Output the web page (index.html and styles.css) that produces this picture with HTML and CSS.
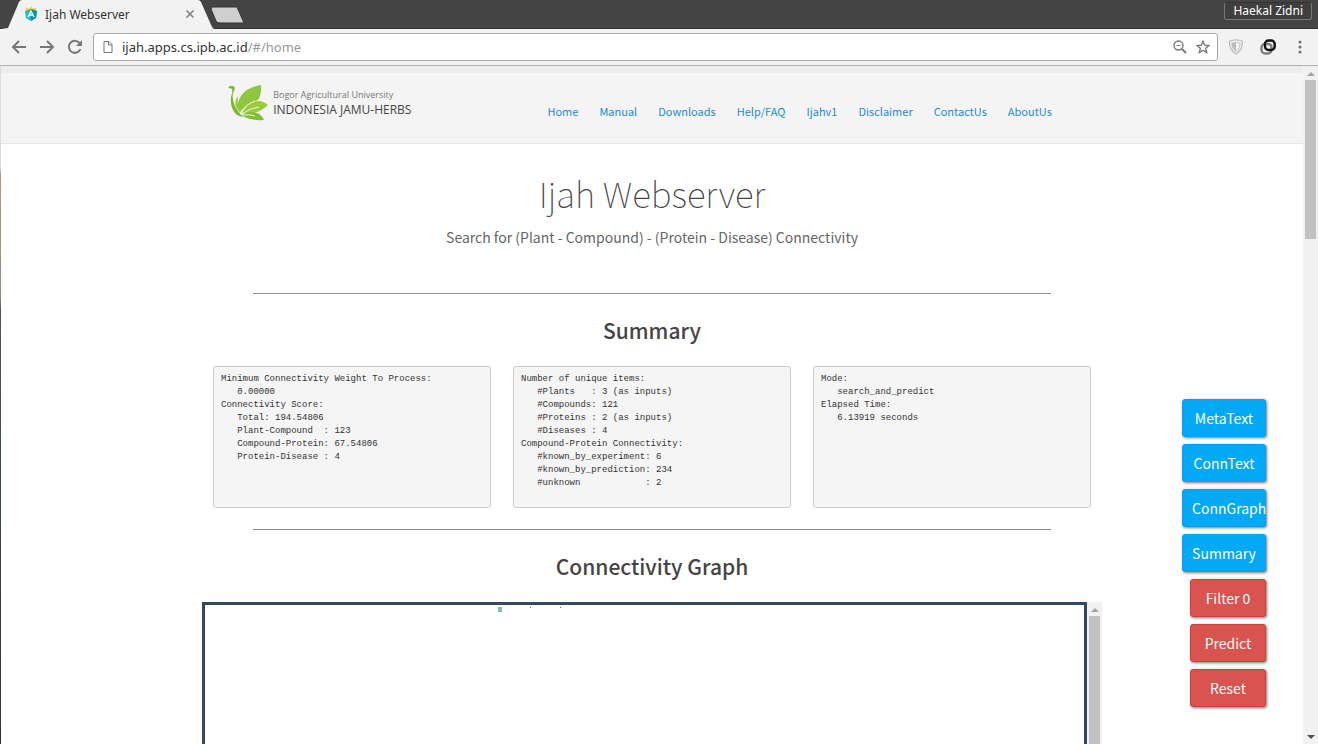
FILE: index.html
```html
<!DOCTYPE html>
<html lang="en">
<head>
<meta charset="utf-8">
<title>Ijah Webserver</title>
<link rel="stylesheet" href="styles.css">
</head>
<body>
<div class="browser">
  <div class="tabstrip">
    <svg class="tab-shape" width="250" height="29" viewBox="0 0 250 29" aria-hidden="true">
      <path d="M0 29L7 28L18 2Q19 0 21 0H197Q199 0 200 2L211 27L213 29Z" fill="#f2f2f2"/>
      <path d="M211 7H236L243 23H219Q216 23 215 21L210 9Z" fill="#cfcfcf" stroke="#333"/>
    </svg>
    <div class="tab">
      <svg width="12" height="14" viewBox="0 0 12 14" aria-hidden="true">
        <path d="M1 0L3 2L6 0L9 2L11 0V5H1Z" fill="#ffca28"/>
        <path d="M0 4L6 2L12 4L11 11L6 14L1 11Z" fill="#26b8cc"/>
        <path d="M6 2L12 4L11 11L6 14Z" fill="#0097a7"/>
        <path d="M3 10L6 4L9 10M4 8H8" fill="none" stroke="#fff" stroke-width="1.3"/>
      </svg>
      <span class="tab-title">Ijah Webserver</span>
      <button class="icon-button" aria-label="Close tab"><svg width="10" height="10" viewBox="0 0 10 10"><path d="M1.5 1.5L8.500 8.500M8.500 1.500L1.500 8.500" stroke="#808080" stroke-width="1.6"/></svg></button>
    </div>
    <button class="profile">Haekal Zidni</button>
  </div>
  <div class="toolbar">
    <button class="icon-button" aria-label="Back"><svg width="16" height="16" viewBox="0 0 16 16"><path d="M15 8H2M8 2L2 8L8 14" fill="none" stroke="#777" stroke-width="2"/></svg></button>
    <button class="icon-button" aria-label="Forward"><svg width="16" height="16" viewBox="0 0 16 16"><path d="M1 8H14M8 2L14 8L8 14" fill="none" stroke="#777" stroke-width="2"/></svg></button>
    <button class="icon-button" aria-label="Reload"><svg width="16" height="16" viewBox="0 0 16 16"><path d="M13.500 10A6 6 0 1 1 12.500 4" fill="none" stroke="#777" stroke-width="2"/><path d="M15 1V7H9Z" fill="#777"/></svg></button>
    <div class="omnibox">
      <svg width="10" height="12" viewBox="0 0 10 12" aria-hidden="true"><path d="M1 .5H6L9 3.500V11.500H1ZM5.500 .5V4H9" fill="none" stroke="#777"/></svg>
      <div class="url">ijah.apps.cs.ipb.ac.id<span class="url-path">/#/home</span></div>
      <button class="icon-button" aria-label="Zoom out"><svg width="14" height="14" viewBox="0 0 14 14"><circle cx="5.500" cy="5.500" r="4.500" fill="none" stroke="#777" stroke-width="1.4"/><path d="M3.500 5.500H7.500" stroke="#777"/><path d="M9 9L13 13" stroke="#777" stroke-width="1.800"/></svg></button>
      <button class="icon-button" aria-label="Bookmark this page"><svg width="14" height="14" viewBox="0 0 14 14"><path d="M7 1.200L8.700 5.200L13 5.500L9.700 8.300L10.700 12.600L7 10.300L3.300 12.600L4.300 8.300L1 5.500L5.300 5.200Z" fill="none" stroke="#717171" stroke-width="1.300"/></svg></button>
    </div>
    <div class="extensions">
      <button class="icon-button" aria-label="Shield"><svg width="16" height="16" viewBox="0 0 16 16"><path d="M8 .8Q11.500 .8 14.500 2.300Q15 10.500 8 15Q1 10.500 1.500 2.300Q4.500 .8 8 .8Z" fill="#eee" stroke="#bdbdbd" stroke-width="1.200"/><path d="M8 3.500Q10 3.500 12.300 4.300Q12 9.500 8 12.500Q4 9.500 3.700 4.300Q6 3.500 8 3.500Z" fill="#f5f5f5" stroke="#c6c6c6"/><path d="M8 3.500V12.500Q4 9.500 3.700 4.300Q6 3.500 8 3.500Z" fill="#bdbdbd"/></svg></button>
      <button class="icon-button" aria-label="Linked extension"><svg width="16" height="16" viewBox="0 0 16 16"><rect x="1.500" y="5" width="10" height="9.500" rx="3.500" fill="none" stroke="#808080" stroke-width="2.400"/><rect x="5" y="1.500" width="9.700" height="9.500" rx="3.500" fill="none" stroke="#111" stroke-width="2.400"/><path d="M6 5H8.500Q11.500 5 11.500 8" fill="none" stroke="#808080" stroke-width="2"/></svg></button>
      <button class="icon-button" aria-label="Menu"><svg width="16" height="16" viewBox="0 0 16 16"><g fill="#777"><circle cx="8" cy="3" r="1.600"/><circle cx="8" cy="8" r="1.600"/><circle cx="8" cy="13" r="1.600"/></g></svg></button>
    </div>
  </div>

  <div class="viewport">
    <div class="page">
      <header class="site-header">
        <a class="brand" href="#/home">
          <svg width="40" height="36" viewBox="0 0 40 36" aria-hidden="true">
            <path d="M0 3Q2 0 5 1Q8 2 6 6Q4 9 5 14Q6 21 10 26Q12 29 15 32Q8 31 5 25Q2 19 3 12Q5 6 4 4Q2 3 0 3Z" fill="#7db832"/>
            <path d="M33 0Q34 9 30 15Q19 19 12 28Q7 20 13 11Q19 2 33 0Z" fill="#8dc63f"/>
            <path d="M14 28Q20 16 32 16Q37 17 40 20Q33 27 24 28Q19 29 14 28Z" fill="#9acb3c"/>
            <path d="M13 30Q21 25 29 28Q34 30 36 35Q22 36 13 30Z" fill="#83bd32"/>
            <path d="M9 24Q5 17 10 11Q9 20 12 27Z" fill="#9acb3c"/>
            <path d="M12 28Q18 19 27 16M14 29Q22 23 31 22M14 30Q21 29 27 31" fill="none" stroke="#f4f4f4" stroke-width="1"/>
          </svg>
          <span class="brand-text"><span class="brand-small">Bogor Agricultural University</span><span class="brand-name">INDONESIA JAMU-HERBS</span></span>
        </a>
        <nav class="site-nav">
          <a href="#/home">Home</a><a href="#/manual">Manual</a><a href="#/downloads">Downloads</a><a href="#/help">Help/FAQ</a><a href="#/ijahv1">Ijahv1</a><a href="#/disclaimer">Disclaimer</a><a href="#/contactus">ContactUs</a><a href="#/aboutus">AboutUs</a>
        </nav>
      </header>
      <main class="content">
        <h1 class="title">Ijah Webserver</h1>
        <p class="subtitle">Search for (Plant - Compound) - (Protein - Disease) Connectivity</p>
        <hr class="rule">
        <h2 class="section-title">Summary</h2>
        <div class="summary">
<pre class="panel">Minimum Connectivity Weight To Process:
   0.00000
Connectivity Score:
   Total: 194.54806
   Plant-Compound  : 123
   Compound-Protein: 67.54806
   Protein-Disease : 4</pre>
<pre class="panel">Number of unique items:
   #Plants   : 3 (as inputs)
   #Compounds: 121
   #Proteins : 2 (as inputs)
   #Diseases : 4
Compound-Protein Connectivity:
   #known_by_experiment: 6
   #known_by_prediction: 234
   #unknown            : 2</pre>
<pre class="panel">Mode:
   search_and_predict
Elapsed Time:
   6.13919 seconds</pre>
        </div>
        <hr class="rule">
        <h2 class="section-title">Connectivity Graph</h2>
        <div class="graph">
          <div class="graph-canvas">
            <svg class="graph-nodes" width="100" height="8" viewBox="0 0 100 8" aria-hidden="true"><path d="M32 2H36V7H32Z" fill="#86bdb4"/><path d="M64 2H65V3H64ZM94 2H95V3H94Z" fill="#667"/></svg>
          </div>
          <div class="scrollbar"><span class="arrow-up"></span><span class="thumb"></span></div>
        </div>
      </main>
    </div>
    <div class="scrollbar page-scrollbar"><span class="arrow-up"></span><span class="thumb"></span><span class="arrow-down"></span></div>
    <div class="actions">
      <button class="action">MetaText</button>
      <button class="action">ConnText</button>
      <button class="action">ConnGraph</button>
      <button class="action">Summary</button>
      <button class="action danger">Filter 0</button>
      <button class="action danger">Predict</button>
      <button class="action danger">Reset</button>
    </div>
  </div>
</div>
</body>
</html>
```

FILE: styles.css
```css
* { box-sizing: border-box; }

body {
  margin: 0;
  font-family: "Noto Sans CJK SC", "Noto Sans", sans-serif;
  color: #444;
  background: #fff;
}

button { font: inherit; margin: 0; cursor: pointer; }

.icon-button {
  display: flex;
  padding: 0;
  border: 0;
  background: none;
}

.browser {
  display: flex;
  flex-direction: column;
  height: 100vh;
  overflow: hidden;
}

/* Window frame */
.tabstrip {
  position: relative;
  display: flex;
  flex: none;
  justify-content: space-between;
  height: 29px;
  padding: 0 6px 0 25px;
  background: #444;
  border-bottom: 1px solid #333;
  font-family: "Noto Sans", sans-serif;
}

.tab-shape { position: absolute; left: 1px; top: 0; }

.tab {
  position: relative;
  display: flex;
  align-items: center;
  width: 170px;
  gap: 8px;
  font-size: 12px;
  color: #333;
}

.tab-title { flex: 1; }

.profile {
  height: 18px;
  margin-top: 2px;
  padding: 0 8px;
  border: 1px solid #777;
  border-top-color: #333;
  border-radius: 3px;
  background: #3f3f3f;
  color: #fff;
  font-size: 12px;
  line-height: 16px;
}

.toolbar {
  display: flex;
  flex: none;
  align-items: center;
  height: 37px;
  padding: 0 10px 0 11px;
  gap: 12px;
  background: #f2f2f2;
  border-bottom: 1px solid #b2b2b2;
}

.omnibox {
  display: flex;
  flex: 1;
  align-items: center;
  gap: 9px;
  height: 28px;
  margin-left: -2px;
  padding: 0 7px 0 9px;
  border: 1px solid #a9a9a9;
  border-radius: 3px;
  background: #fff;
}

.url {
  flex: 1;
  font-family: "Noto Sans", sans-serif;
  font-size: 13px;
  line-height: 20px;
  color: #333;
}

.url-path { color: #999; }

.extensions { display: flex; gap: 16px; margin-left: -2px; }

/* Web page */
.viewport {
  position: relative;
  display: flex;
  flex: 1;
  min-height: 0;
  padding-left: 1px;
  background: linear-gradient(#d5dbe8 15%, #b49a84 16%, #9a8b7a 34%, #4d5b58 36%, #3c4f4a 60%, #283530);
}

.page { flex: 1; min-width: 0; overflow: hidden; background: #fff; }

.site-header {
  display: flex;
  justify-content: center;
  align-items: flex-start;
  height: 78px;
  gap: 136px;
  padding: 12px 24px 0 0;
  border-top: 7px solid #ededed;
  border-bottom: 1px solid #e7e7e7;
  background: #f4f4f4;
}

.brand {
  display: flex;
  gap: 5px;
  color: #444;
  text-decoration: none;
}

.brand-text {
  display: flex;
  flex-direction: column;
  padding-top: 3px;
  font-family: "Open Sans", sans-serif;
  white-space: nowrap;
}

.brand-small { font-size: 9px; line-height: 14px; color: #777; }
.brand-name { font-size: 12px; line-height: 16px; }

.site-nav { display: flex; gap: 21px; padding-top: 17px; }

.site-nav a {
  font-size: 11px;
  line-height: 18px;
  color: #1a8ccc;
  text-decoration: none;
}

.content {
  display: flex;
  flex-direction: column;
  align-items: center;
  max-width: 900px;
  margin: 0 auto;
  padding-top: 24px;
}

.title {
  margin: 0;
  font-size: 35px;
  font-weight: 100;
  line-height: 50px;
}

.subtitle {
  margin: 9px 0 46px;
  font-size: 14px;
  line-height: 20px;
  color: #666;
}

.rule {
  width: calc(100% - 102px);
  height: 1px;
  margin: 0;
  border: 0;
  background: #8e8b96;
}

.section-title {
  margin: 0;
  padding: 21px 0;
  font-size: 21px;
  font-weight: 500;
  line-height: 30px;
}

.summary {
  display: grid;
  grid-template-columns: repeat(3, 1fr);
  align-self: stretch;
  gap: 22px;
  margin: 0 11px 21px;
}

.panel {
  min-height: 142px;
  margin: 0;
  padding: 6px 7px;
  border: 1px solid #ccc;
  border-radius: 3px;
  background: #f5f5f5;
  color: #333;
  font-family: "Liberation Mono", monospace;
  font-size: 9px;
  line-height: 13px;
}

.graph { display: flex; align-self: stretch; }

.graph-canvas {
  flex: 1;
  height: 400px;
  padding-left: 261px;
  border: 3px solid #34495e;
}

.graph-nodes { display: block; }

.scrollbar {
  display: flex;
  flex: none;
  flex-direction: column;
  align-items: center;
  width: 15px;
  padding-top: 6px;
  gap: 4px;
  background: #f1f1f1;
}

.scrollbar .thumb { width: 11px; flex: 1; background: #c1c1c1; }
.page-scrollbar .thumb { flex: none; height: 159px; }

.arrow-up {
  border: 4px solid transparent;
  border-top: 0;
  border-bottom-color: #a3a3a3;
}

.arrow-down {
  margin: auto 0 5px;
  border: 4px solid transparent;
  border-bottom: 0;
  border-top-color: #505050;
}

/* Floating shortcuts over the page */
.actions {
  position: absolute;
  right: 52px;
  bottom: 37px;
  display: flex;
  flex-direction: column;
  align-items: flex-end;
  gap: 7px;
}

.action {
  width: 84px;
  height: 38px;
  padding: 0 9px;
  border: 1px solid #0b9eea;
  border-radius: 3px;
  background: #03a9f4;
  box-shadow: 1px 1px 3px #777;
  color: #fff;
  font-size: 14px;
  line-height: 20px;
  white-space: nowrap;
}

.danger { width: 76px; background: #d9534f; border-color: #d43f3a; }
```
